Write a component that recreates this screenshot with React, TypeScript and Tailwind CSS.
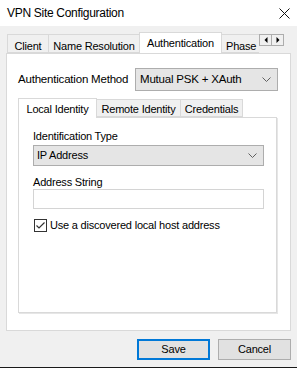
import React from 'react';

const Chevron: React.FC = () => (
    <svg width="9" height="6" viewBox="0 0 9 6" className="shrink-0">
        <path d="M0.5 0.5 L4.5 4.5 L8.5 0.5" fill="none" stroke="#606060" strokeWidth="1" />
    </svg>
);

const Tab: React.FC<{ label: string; active?: boolean; w: string }> = ({ label, active, w }) => (
    <div
        className={
            active
                ? `${w} h-[22px] -mb-px bg-white border border-b-0 border-[#d9d9d9] flex items-start pt-[2px] justify-center shrink-0 relative z-10`
                : `${w} h-[19px] bg-[#f0f0f0] border border-[#d9d9d9] flex items-start pt-[3px] justify-center shrink-0`
        }
    >
        {label}
    </div>
);

const InnerTab: React.FC<{ label: string; active?: boolean; w: string }> = ({ label, active, w }) => (
    <div
        className={
            active
                ? `${w} h-[20px] -mb-px bg-white border border-b-0 border-[#d9d9d9] flex items-start pt-[2px] justify-center shrink-0 relative z-10`
                : `${w} h-[18px] bg-[#f0f0f0] border border-[#d9d9d9] flex items-start pt-[1px] justify-center shrink-0`
        }
    >
        {label}
    </div>
);

const App: React.FC = () => {
    return (
        <div className="w-[297px] h-[368px] bg-[#f0f0f0] flex flex-col font-['Liberation_Sans',Arial,sans-serif] text-[11px] tracking-[-0.2px] text-black overflow-hidden">
            {/* title bar */}
            <div className="h-[26px] bg-white flex items-center justify-between pl-[7px] pr-[7px] shrink-0">
                <span className="text-[12px] tracking-[-0.3px]">VPN Site Configuration</span>
                <svg width="11" height="11" viewBox="0 0 11 11">
                    <path d="M0.5 0.5 L10.5 10.5 M10.5 0.5 L0.5 10.5" stroke="#111" strokeWidth="1" />
                </svg>
            </div>

            <div className="flex flex-col pt-[6px] pl-[6px] shrink-0">
                {/* tab strip */}
                <div className="flex h-[21px] items-end">
                    <div className="flex items-end w-[253px] pl-[1px] overflow-hidden">
                        <Tab label="Client" w="w-[42px]" />
                        <Tab label="Name Resolution" w="w-[92px] -ml-px" />
                        <Tab label="Authentication" w="w-[83px] -ml-px" active />
                        <div className="w-[48px] h-[19px] -ml-px bg-[#f0f0f0] border border-[#d9d9d9] flex items-start pt-[3px] pl-[4px] shrink-0">
                            Phase
                        </div>
                    </div>
                    <div className="self-start mt-[2px] flex h-[12px] border border-[#adadad] bg-[#f0f0f0]">
                        <div className="w-[12px] flex items-center justify-center border-r border-[#adadad]">
                            <svg width="4" height="6" viewBox="0 0 4 6"><path d="M3.5 0 L0.5 3 L3.5 6 Z" fill="#000" /></svg>
                        </div>
                        <div className="w-[11px] flex items-center justify-center">
                            <svg width="4" height="6" viewBox="0 0 4 6"><path d="M0.5 0 L3.5 3 L0.5 6 Z" fill="#000" /></svg>
                        </div>
                    </div>
                </div>

                {/* panel */}
                <div className="w-[285px] h-[278px] bg-white border border-[#d9d9d9] pl-[11px] pt-[14px] flex flex-col">
                    <div className="flex items-center">
                        <span className="w-[117px] text-[11.5px]">Authentication Method</span>
                        <div className="w-[143px] h-[23px] bg-[#e5e5e5] border border-[#adadad] flex items-center justify-between pl-[4px] pr-[6px]">
                            <span className="text-[11.5px]">Mutual PSK + XAuth</span>
                            <Chevron />
                        </div>
                    </div>

                    <div className="flex items-end h-[19px] mt-[7px]">
                        <InnerTab label="Local Identity" w="w-[79px]" active />
                        <InnerTab label="Remote Identity" w="w-[85px] -ml-px" />
                        <InnerTab label="Credentials" w="w-[63px] -ml-px" />
                    </div>

                    <div className="w-[259px] h-[196px] bg-white border border-[#d9d9d9] shadow-[1px_1px_0_#e6e6e6] pl-[14px] pt-[11px] flex flex-col">
                        <span className="leading-[14px]">Identification Type</span>
                        <div className="w-[231px] h-[21px] mt-[2px] bg-[#e5e5e5] border border-[#adadad] flex items-center justify-between pl-[3px] pr-[6px]">
                            <span>IP Address</span>
                            <Chevron />
                        </div>
                        <span className="leading-[14px] mt-[9px]">Address String</span>
                        <div className="w-[231px] h-[20px] bg-white border border-[#d4d4d4]" />
                        <div className="flex items-center mt-[8px] ml-[1px]">
                            <div className="w-[13px] h-[13px] border border-[#333] bg-white flex items-center justify-center">
                                <svg width="9" height="7" viewBox="0 0 9 7">
                                    <path d="M0.5 3.5 L3 6 L8.5 0.5" fill="none" stroke="#333" strokeWidth="1.2" />
                                </svg>
                            </div>
                            <span className="ml-[3px]">Use a discovered local host address</span>
                        </div>
                    </div>
                </div>
            </div>

            {/* buttons */}
            <div className="flex justify-end gap-[8px] pr-[6px] mt-[8px] shrink-0">
                <button className="w-[73px] h-[21px] bg-[#e1e1e1] border-2 border-[#0078d7] flex items-center justify-center">
                    Save
                </button>
                <button className="w-[73px] h-[21px] bg-[#e1e1e1] border border-[#adadad] flex items-center justify-center">
                    Cancel
                </button>
            </div>
            <div className="flex-1" />
            <div className="h-px bg-[#1a1a1a] shrink-0" />
        </div>
    );
};

export default App;
